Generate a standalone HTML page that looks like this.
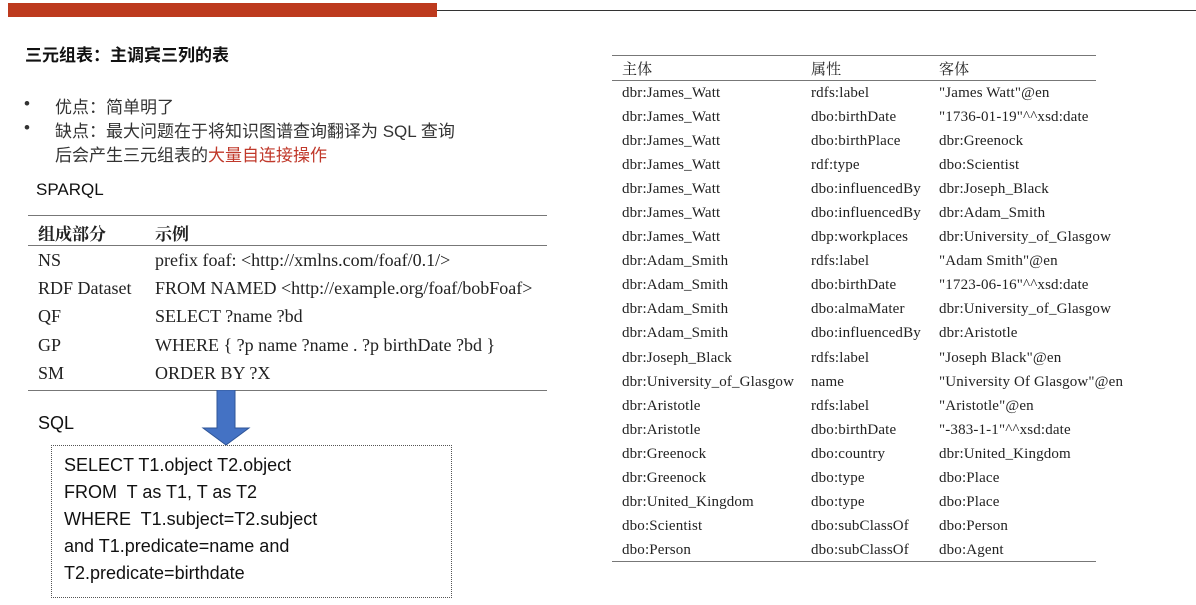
<!DOCTYPE html>
<html><head><meta charset="utf-8"><style>
body{margin:0;width:1196px;height:605px;background:#fff;position:relative;overflow:hidden;font-family:"Liberation Sans","Noto Sans CJK SC",sans-serif;color:#111}
.a{position:absolute;white-space:nowrap}
.s{font-family:"Liberation Serif","Noto Serif CJK SC",serif;font-size:18px;color:#222}
.r{font-family:"Liberation Serif","Noto Serif CJK SC",serif;font-size:15px;letter-spacing:0.15px;color:#222}
</style></head><body>
<div class="a" style="left:8px;top:3px;width:429px;height:14px;background:#bd3a1e"></div>
<div class="a" style="left:437px;top:10px;width:759px;height:1px;background:#333"></div>
<div class="a" style="left:25px;top:41px;font-size:17px;font-weight:bold">三元组表：主调宾三列的表</div>
<div class="a" style="left:24px;top:94px;font-size:17px;color:#333">•</div>
<div class="a" style="left:24px;top:118px;font-size:17px;color:#333">•</div>
<div class="a" style="left:55px;top:93px;font-size:17px;color:#333">优点：简单明了</div>
<div class="a" style="left:55px;top:117px;font-size:17px;color:#333">缺点：最大问题在于将知识图谱查询翻译为 SQL 查询</div>
<div class="a" style="left:55px;top:141px;font-size:17px;color:#333">后会产生三元组表的<span style="color:#c0392b">大量自连接操作</span></div>
<div class="a" style="left:36px;top:180px;font-size:17px">SPARQL</div>
<div class="a" style="left:28px;top:215px;width:519px;height:1px;background:#777"></div>
<div class="a" style="left:28px;top:245px;width:519px;height:1px;background:#777"></div>
<div class="a" style="left:28px;top:390px;width:519px;height:1px;background:#777"></div>
<div class="a s" style="left:38px;top:220px;font-weight:bold;font-size:17px">组成部分</div>
<div class="a s" style="left:155px;top:220px;font-weight:bold;font-size:17px">示例</div>
<div class="a s" style="left:38px;top:250px">NS</div><div class="a s" style="left:155px;top:250px">prefix foaf: &lt;http://xmlns.com/foaf/0.1/&gt;</div>
<div class="a s" style="left:38px;top:278px">RDF Dataset</div><div class="a s" style="left:155px;top:278px">FROM NAMED &lt;http://example.org/foaf/bobFoaf&gt;</div>
<div class="a s" style="left:38px;top:306px">QF</div><div class="a s" style="left:155px;top:306px">SELECT ?name ?bd</div>
<div class="a s" style="left:38px;top:335px">GP</div><div class="a s" style="left:155px;top:335px">WHERE { ?p name ?name . ?p birthDate ?bd }</div>
<div class="a s" style="left:38px;top:363px">SM</div><div class="a s" style="left:155px;top:363px">ORDER BY ?X</div>
<div class="a" style="left:38px;top:413px;font-size:18px">SQL</div>
<svg class="a" style="left:200px;top:390px" width="52" height="56"><path d="M17 0H35V38H49L26 55L3 38H17Z" fill="#4472c4" stroke="#2f5597" stroke-width="1"/></svg>
<div class="a" style="left:51px;top:445px;width:399px;height:151px;border:1px dotted #555"></div>
<div class="a" style="left:64px;top:452px;font-size:18px;line-height:27px;color:#111">SELECT T1.object T2.object<br>FROM&nbsp; T as T1, T as T2<br>WHERE&nbsp; T1.subject=T2.subject<br>and T1.predicate=name and<br>T2.predicate=birthdate</div>
<div class="a" style="left:612px;top:55px;width:484px;height:1px;background:#777"></div>
<div class="a" style="left:612px;top:80px;width:484px;height:1px;background:#777"></div>
<div class="a" style="left:612px;top:561px;width:484px;height:1px;background:#777"></div>
<div class="a r" style="left:622px;top:58px">主体</div><div class="a r" style="left:811px;top:58px">属性</div><div class="a r" style="left:939px;top:58px">客体</div>
<div class="a r" style="left:622px;top:81px;line-height:24.05px">dbr:James_Watt<br>dbr:James_Watt<br>dbr:James_Watt<br>dbr:James_Watt<br>dbr:James_Watt<br>dbr:James_Watt<br>dbr:James_Watt<br>dbr:Adam_Smith<br>dbr:Adam_Smith<br>dbr:Adam_Smith<br>dbr:Adam_Smith<br>dbr:Joseph_Black<br>dbr:University_of_Glasgow<br>dbr:Aristotle<br>dbr:Aristotle<br>dbr:Greenock<br>dbr:Greenock<br>dbr:United_Kingdom<br>dbo:Scientist<br>dbo:Person</div>
<div class="a r" style="left:811px;top:81px;line-height:24.05px">rdfs:label<br>dbo:birthDate<br>dbo:birthPlace<br>rdf:type<br>dbo:influencedBy<br>dbo:influencedBy<br>dbp:workplaces<br>rdfs:label<br>dbo:birthDate<br>dbo:almaMater<br>dbo:influencedBy<br>rdfs:label<br>name<br>rdfs:label<br>dbo:birthDate<br>dbo:country<br>dbo:type<br>dbo:type<br>dbo:subClassOf<br>dbo:subClassOf</div>
<div class="a r" style="left:939px;top:81px;line-height:24.05px">"James Watt"@en<br>"1736-01-19"^^xsd:date<br>dbr:Greenock<br>dbo:Scientist<br>dbr:Joseph_Black<br>dbr:Adam_Smith<br>dbr:University_of_Glasgow<br>"Adam Smith"@en<br>"1723-06-16"^^xsd:date<br>dbr:University_of_Glasgow<br>dbr:Aristotle<br>"Joseph Black"@en<br>"University Of Glasgow"@en<br>"Aristotle"@en<br>"-383-1-1"^^xsd:date<br>dbr:United_Kingdom<br>dbo:Place<br>dbo:Place<br>dbo:Person<br>dbo:Agent</div>
</body></html>
